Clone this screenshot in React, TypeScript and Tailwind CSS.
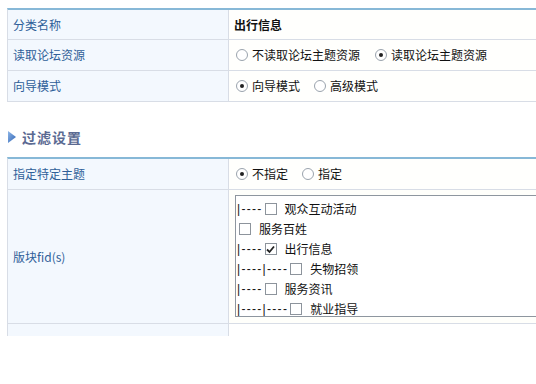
import React from "react";

const font = { fontFamily: '"Noto Sans CJK SC", "Liberation Sans", sans-serif' };

function Radio({ checked }: { checked?: boolean }) {
  return (
    <span className="inline-flex items-center justify-center w-[12px] h-[12px] rounded-full border border-[#9aa3ad] bg-white mr-[4px] shrink-0">
      {checked && <span className="w-[4px] h-[4px] rounded-full bg-[#222]" />}
    </span>
  );
}

function Check({ checked }: { checked?: boolean }) {
  return (
    <span className="inline-flex items-center justify-center w-[12px] h-[12px] border border-[#8d949c] bg-white shrink-0">
      {checked && (
        <svg width="9" height="9" viewBox="0 0 9 9">
          <path d="M1 4.5 L3.5 7 L8 1.5" stroke="#222" strokeWidth="1.8" fill="none" />
        </svg>
      )}
    </span>
  );
}

function Row({ label, children, h }: { label: string; children?: React.ReactNode; h: string }) {
  return (
    <div className={`flex border-b border-[#d8dde6] ${h}`}>
      <div className="w-[221px] shrink-0 bg-[#f3f8fe] border-r border-[#d8dde6] flex items-center pl-[5px] text-[12px] text-[#2f5f99]">
        {label}
      </div>
      <div className="flex-1 bg-[#fffffd] flex items-center pl-[5px] text-[12px] text-[#111]">{children}</div>
    </div>
  );
}

const forums = [
  { pre: "|----", name: "观众互动活动" },
  { pre: "", name: "服务百姓" },
  { pre: "|----", name: "出行信息", checked: true },
  { pre: "|----|----", name: "失物招领" },
  { pre: "|----", name: "服务资讯" },
  { pre: "|----|----", name: "就业指导" },
];

export default function App() {
  return (
    <div className="w-[536px] h-[384px] overflow-hidden bg-white" style={font}>
      <div className="w-[640px] ml-[7px] mt-[8px] border-l border-[#d8dde6] border-t-2 border-t-[#87b8d7]">
        <Row label="分类名称" h="h-[30px]">
          <span className="font-bold">出行信息</span>
        </Row>
        <Row label="读取论坛资源" h="h-[31px]">
          <span className="flex items-center pl-[2px]">
            <Radio />
            <span className="mr-[15px]">不读取论坛主题资源</span>
            <Radio checked />
            <span>读取论坛主题资源</span>
          </span>
        </Row>
        <Row label="向导模式" h="h-[31px]">
          <span className="flex items-center pl-[2px]">
            <Radio checked />
            <span className="mr-[14px]">向导模式</span>
            <Radio />
            <span>高级模式</span>
          </span>
        </Row>
      </div>

      <div className="flex items-center mt-[25px] ml-[8px] h-[20px]">
        <svg width="8" height="12" viewBox="0 0 8 12" className="mr-[6px]">
          <defs>
            <linearGradient id="tri" x1="0" y1="0" x2="1" y2="1">
              <stop offset="0" stopColor="#8fb7e8" />
              <stop offset="1" stopColor="#2f63b4" />
            </linearGradient>
          </defs>
          <path d="M0 0 L8 6 L0 12 Z" fill="url(#tri)" />
        </svg>
        <span className="text-[14px] font-bold text-[#5b6a92] tracking-[1px]">过滤设置</span>
      </div>

      <div className="w-[640px] ml-[7px] mt-[10px] border-l border-[#d8dde6] border-t-2 border-t-[#87b8d7]">
        <Row label="指定特定主题" h="h-[31px]">
          <span className="flex items-center pl-[2px]">
            <Radio checked />
            <span className="mr-[14px]">不指定</span>
            <Radio />
            <span>指定</span>
          </span>
        </Row>
        <div className="flex border-b border-[#d8dde6] h-[134px]">
          <div className="w-[221px] shrink-0 bg-[#f3f8fe] border-r border-[#d8dde6] flex items-center pl-[5px] text-[12px] text-[#2f5f99]">
            版块fid(s)
          </div>
          <div className="flex-1 bg-[#fffffb] pt-[5px] pl-[6px]">
            <div className="w-[400px] h-[122px] border border-[#8e969f] bg-white overflow-hidden pt-[3px] text-[12px] text-[#111]">
              {forums.map((f) => (
                <div key={f.name} className="flex items-center h-[20px] pl-[1px]">
                  {f.pre ? (
                    <span className="mr-[2px] tracking-[1.3px] text-[#111] font-['Liberation_Sans',sans-serif]">
                      {f.pre}
                    </span>
                  ) : (
                    <span className="w-[2px]" />
                  )}
                  <Check checked={f.checked} />
                  <span className="ml-[8px]">{f.name}</span>
                </div>
              ))}
            </div>
          </div>
        </div>
        <div className="flex h-[12px]">
          <div className="w-[221px] shrink-0 bg-[#f3f8fe] border-r border-[#d8dde6]" />
          <div className="flex-1" />
        </div>
      </div>
    </div>
  );
}
